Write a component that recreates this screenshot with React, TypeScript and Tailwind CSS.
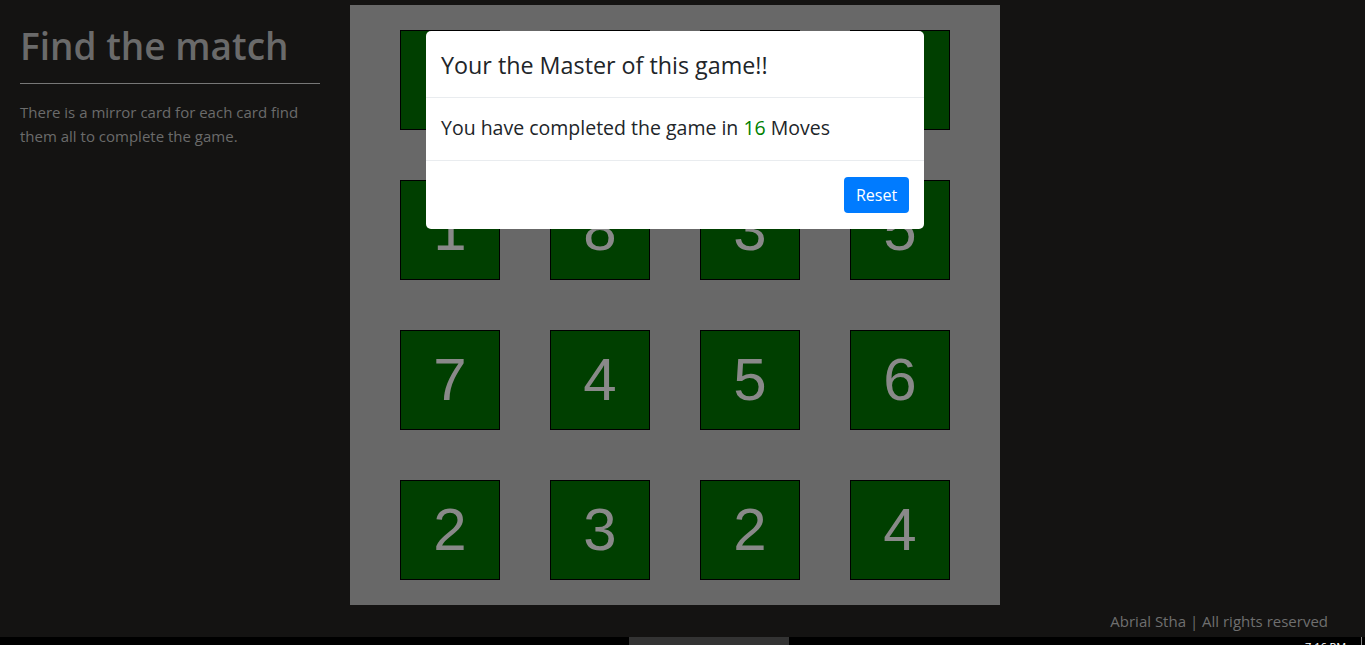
const cards = [1, 6, 7, 8, 1, 8, 3, 5, 7, 4, 5, 6, 2, 3, 2, 4]

function Card({ value }: { value: number }) {
  return (
    <div
      className="w-[100px] h-[100px] bg-[#003f00] border border-black flex items-center justify-center text-[#898989] text-[60px] leading-none"
      style={{ fontFamily: '"Liberation Sans", Arial, sans-serif' }}
    >
      {value}
    </div>
  )
}

function Modal() {
  return (
    <div className="absolute left-[426px] top-[31px] w-[498px] bg-white rounded-[5px] text-[#212529]">
      <div className="px-[15px] pt-[19px] pb-[17px] border-b border-[#e9ecef]">
        <h5 className="text-[23.3px] leading-[30px] font-medium">Your the Master of this game!!</h5>
      </div>
      <div className="px-[15px] pt-[15px] pb-[17px] border-b border-[#e9ecef]">
        <p className="text-[19.5px] leading-[30px]">
          You have completed the game in <span className="text-[#008000]">16</span> Moves
        </p>
      </div>
      <div className="flex justify-end px-[15px] pt-[16px] pb-[16px]">
        <button className="h-[36px] w-[65px] rounded-[4px] bg-[#007bff] text-white text-[16px]">
          Reset
        </button>
      </div>
    </div>
  )
}

export default function App() {
  return (
    <div
      className="relative w-[1365px] h-[645px] bg-[#141312] overflow-hidden flex flex-col"
      style={{ fontFamily: '"Open Sans", "Noto Sans", sans-serif' }}
    >
      <div className="flex flex-1">
        {/* Left column */}
        <div className="w-[350px] pl-[20px] pr-[30px] pt-[22px]">
          <h1 className="text-[37px] leading-[48px] font-semibold text-[#6a6a6a]">Find the match</h1>
          <hr className="mt-[13px] border-t border-[#777]" />
          <p className="mt-[16px] text-[15px] leading-[24px] text-[#6b6b6b]">
            There is a mirror card for each card find them all to complete the game.
          </p>
        </div>

        {/* Board */}
        <div className="mt-[5px] w-[650px] h-[600px] bg-[#686868] px-[50px] py-[25px] grid grid-cols-4 gap-[50px]">
          {cards.map((c, i) => (
            <Card key={i} value={c} />
          ))}
        </div>
      </div>

      {/* Footer */}
      <div className="h-[32px] flex justify-end pr-[37px] pt-[6px] text-[15px] leading-[20px] text-[#6f6f6f]">
        Abrial Stha | All rights reserved
      </div>

      {/* Taskbar strip */}
      <div className="relative h-[8px] bg-black">
        <div className="absolute left-[629px] top-0 w-[160px] h-[8px] bg-[#333]" />
        <div className="absolute left-[1305px] top-[4px] text-[11px] leading-none text-white">7:16 PM</div>
        <div className="absolute left-[1361px] top-0 w-px h-[8px] bg-[#888]" />
      </div>

      <Modal />
    </div>
  )
}
